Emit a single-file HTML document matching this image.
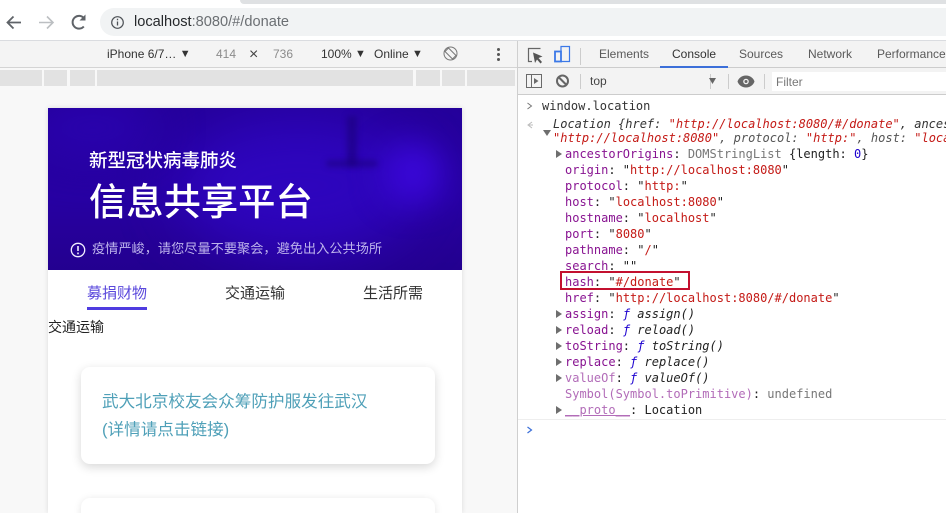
<!DOCTYPE html>
<html lang="zh">
<head>
<meta charset="utf-8">
<style>
html,body{margin:0;padding:0;width:946px;height:513px;overflow:hidden;background:#fff}
body{position:relative;font-family:"Liberation Sans","Noto Sans CJK SC",sans-serif}
.a{position:absolute;white-space:nowrap}
.m{font-family:"DejaVu Sans Mono","Liberation Mono",monospace;font-size:12px;line-height:16px;color:#222}
.p{color:#881391}.pd{color:#b26cb8}.s{color:#c41a16}.g{color:#777}.b{color:#1c00cf}.i{font-style:italic}
.t{font-size:12px;color:#5a5a5a;line-height:16px}
.tri{position:absolute;width:0;height:0;border-left:6px solid #6e6e6e;border-top:4px solid transparent;border-bottom:4px solid transparent}
.dd{font-size:11px;position:relative;top:-1px}
</style>
</head>
<body>
<!-- top chrome -->
<div class="a" style="left:0;top:0;width:946px;height:40px;background:#fff"></div>
<div class="a" style="left:240px;top:0;width:706px;height:4px;background:#dfe1e3;border-bottom-left-radius:6px"></div>
<div class="a" style="left:100px;top:8px;width:846px;height:28px;background:#f1f3f4;border-radius:14px 0 0 14px"></div>
<svg class="a" style="left:0;top:8px" width="130" height="30" viewBox="0 0 130 30" fill="none">
<path d="M21 14.500H8M13.500 8.500L7.500 14.500 13.500 20.500" stroke="#5f6368" stroke-width="1.800"/>
<path d="M39 14.500H52.500M47 8.500L53 14.500 47 20.500" stroke="#bcbfc2" stroke-width="1.600"/>
<path d="M83.800 18.500a6.400 6.400 0 1 1 .4-8" stroke="#5f6368" stroke-width="2"/>
<path d="M85.500 6.500v6h-6z" fill="#5f6368"/>
<circle cx="117.500" cy="14.500" r="5.800" stroke="#4d5156" stroke-width="1.200"/>
<path d="M117.500 13.500v4M117.500 10.800v1.400" stroke="#4d5156" stroke-width="1.300"/>
</svg>
<div class="a" style="left:134px;top:14px;font-size:14.600px;line-height:17px;color:#6b6f73"><span style="color:#25282b">localhost</span>:8080/#/donate</div>
<div class="a" style="left:0;top:40px;width:946px;height:1px;background:#dadce0"></div>

<!-- device toolbar -->
<div class="a" style="left:0;top:41px;width:517px;height:472px;background:#f8f8f8"></div>
<div class="a" style="left:0;top:41px;width:517px;height:26px;background:#f4f4f4"></div>
<div class="a" style="left:0;top:67px;width:517px;height:1px;background:#d4d4d4"></div>
<div class="a" style="left:107px;top:46px;font-size:12px;line-height:16px;color:#333">iPhone 6/7… <span class="dd">▼</span></div>
<div class="a" style="left:216px;top:46px;font-size:12px;line-height:16px;color:#8b8b8b">414</div>
<div class="a" style="left:249px;top:47px;font-size:16px;line-height:16px;color:#444">×</div>
<div class="a" style="left:273px;top:46px;font-size:12px;line-height:16px;color:#8b8b8b">736</div>
<div class="a" style="left:321px;top:46px;font-size:12px;line-height:16px;color:#333">100% <span class="dd">▼</span></div>
<div class="a" style="left:374px;top:46px;font-size:12px;line-height:16px;color:#333">Online <span class="dd">▼</span></div>
<svg class="a" style="left:441px;top:44px" width="20" height="20" viewBox="0 0 20 20" fill="none" stroke="#777" stroke-width="1">
<circle cx="9.500" cy="9.500" r="6.500"/><path d="M4 7.500L7.500 4 15 11.500 11.500 15z"/>
</svg>
<div class="a" style="left:497px;top:48px;width:3px;height:3px;border-radius:2px;background:#555;box-shadow:0 5px 0 #555,0 10px 0 #555"></div>
<!-- ruler bar -->
<div class="a" style="left:0;top:70px;width:42px;height:16px;background:#e2e2e2"></div>
<div class="a" style="left:44px;top:70px;width:23px;height:16px;background:#e2e2e2"></div>
<div class="a" style="left:70px;top:70px;width:25px;height:16px;background:#e2e2e2"></div>
<div class="a" style="left:97px;top:70px;width:316px;height:16px;background:#e2e2e2"></div>
<div class="a" style="left:416px;top:70px;width:24px;height:16px;background:#e2e2e2"></div>
<div class="a" style="left:442px;top:70px;width:23px;height:16px;background:#e2e2e2"></div>
<div class="a" style="left:467px;top:70px;width:48px;height:16px;background:#e2e2e2"></div>

<!-- phone page -->
<div class="a" style="left:48px;top:108px;width:414px;height:405px;background:#fff;box-shadow:0 0 5px rgba(0,0,0,.12)"></div>
<div class="a" style="left:48px;top:108px;width:414px;height:162px;overflow:hidden;background:linear-gradient(180deg,#25009b 0%,#2700a3 55%,#250095 85%,#230090 100%)">
<div class="a" style="left:130px;top:10px;width:240px;height:135px;border-radius:50%;background:#2e05bd;filter:blur(28px)"></div>
<div class="a" style="left:335px;top:35px;width:60px;height:60px;border-radius:50%;background:#3a07d8;filter:blur(16px)"></div>
<div class="a" style="left:-20px;top:-10px;width:130px;height:60px;border-radius:50%;background:#2a02ae;filter:blur(22px)"></div>
<div class="a" style="left:299px;top:8px;width:10px;height:50px;background:rgba(25,0,120,.55);filter:blur(3px)"></div>
<div class="a" style="left:278px;top:52px;width:52px;height:7px;border-radius:6px;background:rgba(25,0,120,.5);filter:blur(3px)"></div>
</div>
<div class="a" style="left:89px;top:150px;font-size:18.500px;line-height:22px;color:#fff;font-weight:500">新型冠状病毒肺炎</div>
<div class="a" style="left:89px;top:179px;font-size:37.300px;line-height:46px;color:#fff;font-weight:500">信息共享平台</div>
<svg class="a" style="left:70px;top:242px" width="16" height="16" viewBox="0 0 16 16" fill="none" stroke="#f0ecff">
<circle cx="8" cy="8" r="6.700" stroke-width="1.300"/><path d="M8 4v5M8 10.500v1.800" stroke-width="1.600"/>
</svg>
<div class="a" style="left:92px;top:240px;font-size:13.200px;line-height:18px;color:#bdb3ec">疫情严峻，请您尽量不要聚会，避免出入公共场所</div>
<div class="a" style="left:87px;top:284px;font-size:15px;line-height:20px;color:#5a48dc">募捐财物</div>
<div class="a" style="left:87px;top:307px;width:60px;height:3px;background:#4f3ce0"></div>
<div class="a" style="left:225px;top:284px;font-size:15px;line-height:20px;color:#333">交通运输</div>
<div class="a" style="left:363px;top:284px;font-size:15px;line-height:20px;color:#333">生活所需</div>
<div class="a" style="left:48px;top:317px;font-size:14px;line-height:20px;color:#222">交通运输</div>
<div class="a" style="left:81px;top:367px;width:354px;height:97px;background:#fff;border-radius:9px;box-shadow:0 3px 10px rgba(0,0,0,.16)"></div>
<div class="a" style="left:102px;top:388px;font-size:16.600px;line-height:28px;color:#4fa0b8">武大北京校友会众筹防护服发往武汉<br>(详情请点击链接)</div>
<div class="a" style="left:81px;top:498px;width:354px;height:40px;background:#fff;border-radius:9px;box-shadow:0 1px 8px rgba(0,0,0,.1)"></div>

<!-- devtools -->
<div class="a" style="left:517px;top:41px;width:1px;height:472px;background:#cfcfcf"></div>
<div class="a" style="left:518px;top:41px;width:428px;height:26px;background:#f3f3f3"></div>
<div class="a" style="left:518px;top:67px;width:428px;height:1px;background:#ccc"></div>
<div class="a" style="left:518px;top:68px;width:428px;height:26px;background:#f3f3f3"></div>
<div class="a" style="left:518px;top:94px;width:428px;height:1px;background:#ccc"></div>
<svg class="a" style="left:518px;top:41px" width="260" height="54" viewBox="0 0 260 54" fill="none">
<path d="M22.500 7.500H10.500V20.500H14" stroke="#666" stroke-width="1.200"/>
<path d="M15 11.500l9.500 4-4 1.500 3.500 4-1.500 1.500-3.500-4L17 22z" fill="#555"/>
<path d="M43 10.500V5.500H51.500V20.500H43" stroke="#3b78e7" stroke-width="1.200"/>
<rect x="37" y="10.500" width="6" height="10" stroke="#3b78e7" stroke-width="1.800"/>
<path d="M62.500 7v17" stroke="#ccc"/>
<rect x="8.500" y="33.500" width="15" height="13" stroke="#6a6a6a"/>
<path d="M13.500 33.500v13" stroke="#6a6a6a"/>
<path d="M16 37l4.500 3-4.500 3z" fill="#6a6a6a"/>
<circle cx="44.500" cy="40" r="5.500" stroke="#666" stroke-width="2"/>
<path d="M40.500 36l8 8" stroke="#666" stroke-width="2"/>
<path d="M62.500 33v15" stroke="#ccc"/>
<path d="M192.500 33v15M246.500 33v15M210.500 33v15" stroke="#ccc"/>
<path d="M228 34.500c4.500 0 7.500 3 8.500 6-1 3-4 6-8.500 6s-7.500-3-8.500-6c1-3 4-6 8.500-6z" fill="#666"/>
<circle cx="228" cy="40.500" r="2.800" fill="#f3f3f3"/>
<circle cx="228" cy="40.500" r="1.500" fill="#666"/>
<path d="M191 37h7l-3.500 6z" fill="#666"/>
</svg>
<div class="a t" style="left:599px;top:46px">Elements</div>
<div class="a t" style="left:672px;top:46px;color:#333">Console</div>
<div class="a" style="left:660px;top:66px;width:68px;height:2px;background:#3b6fd9"></div>
<div class="a t" style="left:739px;top:46px">Sources</div>
<div class="a t" style="left:808px;top:46px">Network</div>
<div class="a t" style="left:877px;top:46px">Performance</div>
<div class="a t" style="left:590px;top:73px;color:#444">top</div>
<div class="a" style="left:772px;top:72px;width:174px;height:19px;background:#fff"></div>
<div class="a t" style="left:776px;top:74px;color:#777">Filter</div>

<!-- console -->
<svg class="a" style="left:526px;top:99px" width="14" height="340" viewBox="0 0 14 340" fill="none">
<path d="M1.500 4l4 3-4 3" stroke="#777"/>
<path d="M6 23l-4 3 4 3M3 26h4" stroke="#bbb"/>
<path d="M1.500 328l4 3-4 3" stroke="#3b6fd9" stroke-width="1.200"/>
</svg>
<div class="a m" style="left:542px;top:98px;color:#333">window.location</div>
<div class="a m i" style="left:553px;top:117px;line-height:14px;color:#333">Location {href: <span class="s">"http://localhost:8080/#/donate"</span>, ances</div>
<div class="a m i" style="left:553px;top:131px;line-height:14px;color:#555"><span class="s">"http://localhost:8080"</span>, protocol: <span class="s">"http:"</span>, host: <span class="s">"loca</span></div>
<div class="a" style="left:543px;top:130px;width:0;height:0;border-top:6px solid #6e6e6e;border-left:4px solid transparent;border-right:4px solid transparent"></div>
<div class="tri" style="left:556px;top:150px"></div>
<div class="a m" style="left:565px;top:146px"><span class="p">ancestorOrigins</span>: <span class="g">DOMStringList</span> {length: <span class="b">0</span>}</div>
<div class="a m" style="left:565px;top:162px"><span class="p">origin</span>: "<span class="s">http://localhost:8080</span>"</div>
<div class="a m" style="left:565px;top:178px"><span class="p">protocol</span>: "<span class="s">http:</span>"</div>
<div class="a m" style="left:565px;top:194px"><span class="p">host</span>: "<span class="s">localhost:8080</span>"</div>
<div class="a m" style="left:565px;top:210px"><span class="p">hostname</span>: "<span class="s">localhost</span>"</div>
<div class="a m" style="left:565px;top:226px"><span class="p">port</span>: "<span class="s">8080</span>"</div>
<div class="a m" style="left:565px;top:242px"><span class="p">pathname</span>: "<span class="s">/</span>"</div>
<div class="a m" style="left:565px;top:258px"><span class="p">search</span>: ""</div>
<div class="a m" style="left:565px;top:274px"><span class="p">hash</span>: "<span class="s">#/donate</span>"</div>
<div class="a" style="left:560px;top:271px;width:126px;height:15px;border:2px solid #c3102f"></div>
<div class="a m" style="left:565px;top:290px"><span class="p">href</span>: "<span class="s">http://localhost:8080/#/donate</span>"</div>
<div class="tri" style="left:556px;top:310px"></div>
<div class="a m" style="left:565px;top:306px"><span class="p">assign</span>: <span class="b i">ƒ</span> <span class="i">assign()</span></div>
<div class="tri" style="left:556px;top:326px"></div>
<div class="a m" style="left:565px;top:322px"><span class="p">reload</span>: <span class="b i">ƒ</span> <span class="i">reload()</span></div>
<div class="tri" style="left:556px;top:342px"></div>
<div class="a m" style="left:565px;top:338px"><span class="p">toString</span>: <span class="b i">ƒ</span> <span class="i">toString()</span></div>
<div class="tri" style="left:556px;top:358px"></div>
<div class="a m" style="left:565px;top:354px"><span class="p">replace</span>: <span class="b i">ƒ</span> <span class="i">replace()</span></div>
<div class="tri" style="left:556px;top:374px"></div>
<div class="a m" style="left:565px;top:370px"><span class="pd">valueOf</span>: <span class="b i">ƒ</span> <span class="i">valueOf()</span></div>
<div class="a m" style="left:565px;top:386px"><span class="pd">Symbol(Symbol.toPrimitive)</span>: <span class="g">undefined</span></div>
<div class="tri" style="left:556px;top:406px"></div>
<div class="a m" style="left:565px;top:402px"><span class="pd" style="text-decoration:underline">__proto__</span>: Location</div>
<div class="a" style="left:518px;top:419px;width:428px;height:1px;background:#eee"></div>
</body>
</html>
